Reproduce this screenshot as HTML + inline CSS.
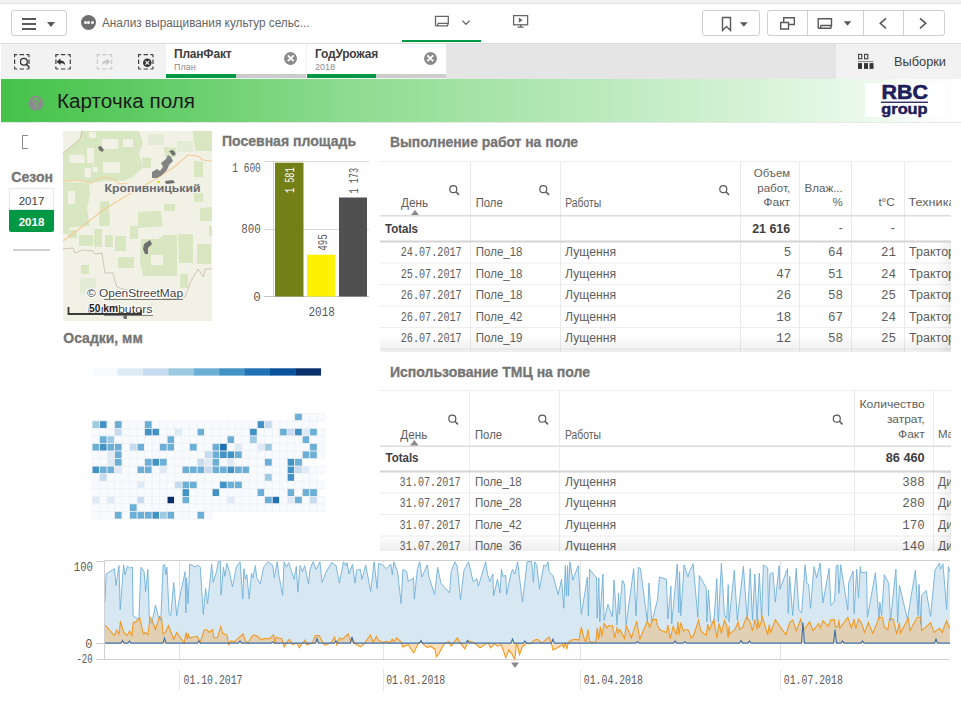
<!DOCTYPE html>
<html><head><meta charset="utf-8">
<style>
*{margin:0;padding:0;box-sizing:border-box}
html,body{width:961px;height:724px;overflow:hidden;background:#fff;font-family:"Liberation Sans",sans-serif;color:#595959}
.a{position:absolute}
.mono{font-family:"Liberation Mono",monospace}
#top{left:0;top:0;width:961px;height:4px;background:#f1f1f1;border-bottom:1px solid #e2e2e2}
#bar{left:0;top:4px;width:961px;height:40px;background:#fff;border-bottom:1px solid #dadada}
.btn{border:1px solid #cfcfcf;border-radius:3px;background:#fff}
#tool{left:1px;top:44px;width:960px;height:35px;background:#f2f2f2}
.tab{top:44px;height:34px;background:#fff}
.tab .t1{position:absolute;left:8px;top:3px;font-size:12px;font-weight:bold;color:#404040;letter-spacing:-0.2px}
.tab .t2{position:absolute;left:8px;top:18px;font-size:9px;color:#8c8c8c}
.tab .pb{position:absolute;left:0;bottom:0;height:4px;width:100%;background:#cccccc}
.tab .pg{position:absolute;left:0;bottom:0;height:4px;background:#009845}
.tab .x{position:absolute;top:8px;width:13px;height:13px;border-radius:50%;background:#8a8a8a}
#hdr{left:1px;top:79px;width:960px;height:44px;background:linear-gradient(to right,#45c24a 0%,#64cd68 17%,#8edc91 37%,#b2e7b3 57%,#d3f2d4 77%,#ebf9eb 90%,#ffffff 100%);border-bottom:1px solid #e8e8e8}
.ttl{font-size:14px;font-weight:bold;color:#7b7b7b;letter-spacing:-0.3px}
table{border-collapse:collapse}
.tbl{font-size:11px;color:#595959}
.hl{background:#e6e6e6}
.vl{background:#ececec}
</style></head><body>
<div class="a" id="top"></div>
<div class="a" id="bar">
  <div class="a btn" style="left:11px;top:6px;width:56px;height:26px">
    <div class="a" style="left:10px;top:7px;width:14px;height:2px;background:#595959"></div>
    <div class="a" style="left:10px;top:12px;width:14px;height:2px;background:#595959"></div>
    <div class="a" style="left:10px;top:17px;width:14px;height:2px;background:#595959"></div>
    <div class="a" style="left:35px;top:11px;width:0;height:0;border-left:4px solid transparent;border-right:4px solid transparent;border-top:5px solid #595959"></div>
  </div>
  <div class="a" style="left:81px;top:11px;width:15px;height:15px;border-radius:50%;background:#6f6f6f"></div>
  <div class="a" style="left:83.5px;top:17px;width:3px;height:3px;border-radius:50%;background:#fff"></div>
  <div class="a" style="left:87px;top:17px;width:3px;height:3px;border-radius:50%;background:#fff"></div>
  <div class="a" style="left:90.5px;top:17px;width:3px;height:3px;border-radius:50%;background:#fff"></div>
  <svg class="a" style="left:0;top:0" width="400" height="40" viewBox="0 4 400 40"><text x="101.9" y="27.3" font-size="12" fill="#666" textLength="207.7" lengthAdjust="spacingAndGlyphs">Анализ выращивания культур сельс...</text></svg>
  <svg class="a" style="left:0;top:0" width="961" height="40" viewBox="0 4 961 40">
    <path d="M435.5 25.8 V16.3 H448.3 V23.3 M435.5 25.8 H447.4 L448.3 23.3 H438.2 L437.3 25.8" fill="none" stroke="#666" stroke-width="1.3"/>
    <path d="M462.3 20.6 L466 24.3 L469.7 20.6" fill="none" stroke="#666" stroke-width="1.3"/>
    <rect x="513.6" y="15.6" width="14" height="9.2" fill="none" stroke="#666" stroke-width="1.3"/>
    <path d="M518.8 17.6 L522.6 20.2 L518.8 22.8Z" fill="#666"/>
    <path d="M520.6 24.8 V26.6 M517.6 27.2 H523.6" stroke="#666" stroke-width="1.3"/>
  </svg>
  <div class="a" style="left:402px;top:35.5px;width:79px;height:2px;background:#009845"></div>
  <div class="a btn" style="left:702px;top:6px;width:58px;height:26px">
    <svg class="a" style="left:14px;top:5px" width="32" height="16" viewBox="0 0 32 16">
      <path d="M5.5 1.5 H13.5 V14.5 L9.5 10.5 L5.5 14.5 Z" fill="none" stroke="#595959" stroke-width="1.4"/>
      <path d="M23 6.3 H30.6 L26.8 10.8Z" fill="#595959"/>
    </svg>
  </div>
  <div class="a btn" style="left:767px;top:6px;width:178px;height:26px"></div>
  <div class="a" style="left:807px;top:7px;width:1px;height:24px;background:#cfcfcf"></div>
  <div class="a" style="left:863px;top:7px;width:1px;height:24px;background:#cfcfcf"></div>
  <div class="a" style="left:903px;top:7px;width:1px;height:24px;background:#cfcfcf"></div>
  <svg class="a" style="left:0;top:0" width="961" height="40" viewBox="0 4 961 40">
    <path d="M780.7 22.5 H788.5 V29 H780.7 Z M783.7 22.5 V17.7 H794.3 V24.5 H788.5" fill="none" stroke="#595959" stroke-width="1.4"/>
    <path d="M818.2 28.3 V18.8 H831.5 V25.5 M818.2 28.3 H830.7 L831.5 25.5 H821 L820.2 28.3" fill="none" stroke="#595959" stroke-width="1.4"/>
    <path d="M843.7 21.3 H851.3 L847.5 25.8Z" fill="#595959"/>
    <path d="M886 18.3 L880.3 23.3 L886 28.3" fill="none" stroke="#595959" stroke-width="1.6"/>
    <path d="M920 18.3 L925.7 23.3 L920 28.3" fill="none" stroke="#595959" stroke-width="1.6"/>
  </svg>
</div>
<div class="a" id="tool"></div>
<div class="a" style="left:446px;top:44px;width:390px;height:35px;background:#e5e5e5"></div>
<svg class="a" style="left:0;top:44px" width="170" height="35" viewBox="0 44 170 35">
  <g fill="none" stroke="#404040" stroke-width="1.2" stroke-dasharray="2.6 2.4 4.4 2.4 2.6 0">
    <rect x="14.6" y="54.6" width="14.4" height="14.4"/>
    <rect x="55.9" y="54.6" width="14.4" height="14.4"/>
    <rect x="138.6" y="54.6" width="14.4" height="14.4"/>
  </g>
  <rect x="97.3" y="54.6" width="14.4" height="14.4" fill="none" stroke="#c8c8c8" stroke-width="1.2" stroke-dasharray="2.6 2.4 4.4 2.4 2.6 0"/>
  <circle cx="23.9" cy="61.8" r="3.4" fill="#f2f2f2" stroke="#333" stroke-width="1.3"/>
  <path d="M26.4 64.3 L29 67" stroke="#333" stroke-width="1.6"/>
  <path d="M56.5 61.8 L60.5 58.6 V60.6 C63 60.6 65 62 65.2 65 C64 63.6 62.5 63.2 60.5 63.2 V65Z" fill="#333"/>
  <path d="M110.5 61.8 L106.5 58.6 V60.6 C104 60.6 102 62 101.8 65 C103 63.6 104.5 63.2 106.5 63.2 V65Z" fill="#c8c8c8"/>
  <circle cx="147.3" cy="62.8" r="4.3" fill="#333"/>
  <path d="M145.4 60.9 L149.2 64.7 M149.2 60.9 L145.4 64.7" stroke="#f2f2f2" stroke-width="1.2"/>
</svg>
<div class="a tab" style="left:166px;width:140px">
  <div class="t1">ПланФакт</div><div class="t2">План</div>
  <div class="x" style="left:118px"></div>
  <div class="pb"><div class="pg" style="width:70px"></div></div>
</div>
<div class="a tab" style="left:307px;width:139px">
  <div class="t1">ГодУрожая</div><div class="t2">2018</div>
  <div class="x" style="left:117px"></div>
  <div class="pb"><div class="pg" style="width:69px"></div></div>
</div>
<svg class="a" style="left:0;top:44px" width="961" height="35" viewBox="0 0 961 35">
  <path d="M287.8 11.3 L293.7 17.2 M293.7 11.3 L287.8 17.2" stroke="#fff" stroke-width="1.8"/>
  <path d="M427.3 11.3 L433.2 17.2 M433.2 11.3 L427.3 17.2" stroke="#fff" stroke-width="1.8"/>

</svg>
<div class="a" style="left:836px;top:44px;width:125px;height:35px;background:#f2f2f2"></div>
<svg class="a" style="left:836px;top:44px" width="40" height="35" viewBox="836 44 40 35">
  <rect x="858.6" y="54.4" width="3.2" height="4.4" fill="none" stroke="#404040" stroke-width="1.1"/>
  <rect x="864.6" y="54.4" width="3.2" height="4.4" fill="none" stroke="#404040" stroke-width="1.1"/>
  <rect x="858" y="61" width="15.5" height="1.1" fill="#8a8a8a"/>
  <rect x="858" y="63.1" width="4" height="5.8" fill="#333"/>
  <rect x="864" y="63.1" width="4" height="5.8" fill="#333"/>
  <rect x="869.5" y="63.1" width="4" height="5.8" fill="#333"/>
</svg>
<svg class="a" style="left:880px;top:44px" width="81" height="35" viewBox="880 44 81 35"><text x="894" y="65.8" font-size="12.5" fill="#404040" textLength="52" lengthAdjust="spacingAndGlyphs">Выборки</text></svg>

<div class="a" id="hdr"></div>
<svg class="a" style="left:26px;top:93px" width="20" height="20" viewBox="26 93 20 20"><circle cx="35.8" cy="103.2" r="7.4" fill="#8c8c8c"/><path d="M33.2 101.2 C33.2 99 34.5 98.4 35.9 98.4 C37.4 98.4 38.5 99.3 38.5 100.6 C38.5 102.2 36.2 102.6 36 104.8" fill="none" stroke="#52c352" stroke-width="1.5"/><circle cx="35.9" cy="107.2" r="0.95" fill="#52c352"/></svg>
<svg class="a" style="left:0;top:79px" width="300" height="44" viewBox="0 79 300 44"><text x="57" y="108.2" font-size="20" fill="#1a1a1a" textLength="138" lengthAdjust="spacingAndGlyphs">Карточка поля</text></svg>
<div class="a" style="left:865px;top:83px;width:82px;height:34px;background:#fff"></div>
<svg class="a" style="left:865px;top:83px" width="82" height="35" viewBox="865 83 82 35">
  <text x="881.5" y="99.2" font-size="19.5" font-weight="bold" fill="#1e1e5a" textLength="46.5" lengthAdjust="spacingAndGlyphs" stroke="#1e1e5a" stroke-width="0.6">RBC</text>
  <rect x="881" y="101.6" width="47" height="1.3" fill="#1e1e5a"/>
  <text x="881.3" y="114.3" font-size="14.5" font-weight="bold" fill="#1e1e5a" textLength="46.3" lengthAdjust="spacingAndGlyphs" stroke="#1e1e5a" stroke-width="0.5">group</text>
</svg>

<!-- left filter -->
<div class="a" style="left:22px;top:135px;width:6px;height:14px;border:1.5px solid #8a8a8a;border-right:none"></div>
<svg class="a" style="left:0;top:160px" width="70" height="28" viewBox="0 160 70 28"><text x="11.3" y="182" font-size="15" font-weight="bold" fill="#757575" stroke="#757575" stroke-width="0.3" textLength="41.7" lengthAdjust="spacingAndGlyphs">Сезон</text></svg>
<div class="a" style="left:9px;top:188px;width:45px;height:22px;border:1px solid #e8e8e8;background:#fff;font-size:11.5px;color:#404040;text-align:center;line-height:24px">2017</div>
<div class="a" style="left:9px;top:210px;width:45px;height:22px;background:#009845;border-radius:0 0 2px 2px;font-size:11.5px;font-weight:bold;color:#fff;text-align:center;line-height:25px">2018</div>
<div class="a" style="left:13px;top:249px;width:37px;height:2px;background:#cfcfcf"></div>

<!-- map -->
<svg class="a" style="left:63px;top:131px" width="149" height="190" viewBox="0 0 149 190">
  <rect width="149" height="190" fill="#f1f1e6"/>
  <g fill="#d8e6c1">
    <path d="M18 0 H76 L80 12 L76 22 L80 36 L70 46 L60 50 L40 50 L28 52 L15 50 L0 51 V22 L5 18 L17 8Z"/>
    <path d="M0 51 L26 52 L27 64 L24 78 L27 95 L0 97Z"/>
    <path d="M37 71 L46 70 L47 95 L36 95Z"/>
    <path d="M75 81 L98 80 L100 95 L75 97Z"/>
    <path d="M101 73 L112 73 L112 80 L101 80Z"/>
    <path d="M79 26 L88 27 L88 37 L80 37Z"/>
    <path d="M101 16 L113 17 L113 26 L102 26Z"/>
    <path d="M130 0 H149 V20 L132 20Z"/>
    <path d="M131 30 L140 31 L140 46 L131 46Z"/>
    <path d="M131 62 L140 62 L140 71 L131 71Z"/>
    <path d="M137 77 L149 76 V90 L137 90Z"/>
    <path d="M0 95 L6 95 L6 103 L0 103Z"/>
    <path d="M5 99 L14 99 L14 107 L5 107Z"/>
    <path d="M16 104 L30 104 L30 115 L16 115Z"/>
    <path d="M31 98 L39 98 L39 116 L31 116Z"/>
    <path d="M42 104 L50 104 L50 116 L42 116Z"/>
    <path d="M52 105 L63 105 L63 120 L52 120Z"/>
    <path d="M67 95 L75 95 L75 108 L67 108Z"/>
    <path d="M55 126 L71 126 L71 137 L55 137Z"/>
    <path d="M18 134 L26 134 L26 143 L18 143Z"/>
    <path d="M78 108 L95 108 L101 104 L114 104 L114 145 L80 145 L77 130Z"/>
    <path d="M115 103 L130 103 L130 132 L116 132Z"/>
    <path d="M134 113 L148 113 L148 133 L134 133Z"/>
    <path d="M117 143 L125 143 L125 157 L117 157Z"/>
    <path d="M146 95 L149 95 V105 L146 105Z"/>
  </g>
  <g fill="#e4ecd7"><path d="M17 147 L33 147 L33 163 L17 163Z"/><path d="M85 3 L101 3 L101 14 L85 14Z"/><path d="M114 10 L130 10 L130 21 L114 21Z"/></g>
  <g fill="#f1f1e6">
    <path d="M39 8 L55 8 L55 18 L39 18Z"/>
    <path d="M24 17 L31 17 L31 32 L24 32Z"/>
    <path d="M6.5 23.6 L21.6 23.6 L21.6 32 L6.5 32Z"/>
    <path d="M40 31 L57 31 L57 42 L40 42Z"/>
    <path d="M21.6 37 L28 37 L28 46.5 L21.6 46.5Z"/>
    <path d="M29.5 36 L35 36 L35 41 L29.5 41Z"/>
    <path d="M26 1 L33 1 L33 7 L26 7Z"/>
    <path d="M5 60 L12 60 L12 73 L5 73Z"/>
    <path d="M88 124 L100 124 L100 134 L88 134Z"/>
    <path d="M60 8 L70 8 L70 16 L60 16Z"/>
  </g>
  <path d="M0 50 L15 49 L28 52 L40 46 L50 48 L57 53 L65 52" fill="none" stroke="#f3cd98" stroke-width="1.1"/>
  <path d="M0 110 L20 95 L40 79 L58 68 L77 57 L96 46 L111 36 L125 24 L135 25 L140 29 L149 30" fill="none" stroke="#f3cd98" stroke-width="1.1"/>
  <path d="M0 118 L10 117 L12 122 L20 119 L30 120 L32 123 L39 122 L40 130 L42 142 L50 142 L52 150 L54 156 L60 158 L75 162 L95 162 L101 168 L110 168 L122 166 L128 150 L135 138 L140.5 146 L142 138 L149 138" fill="none" stroke="#c9b9aa" stroke-width="0.8"/>
  <path d="M19 0 L17 8 L5 18 L0 22" fill="none" stroke="#c9b9aa" stroke-width="0.8"/>
  <g fill="#707070">
    <path d="M35 16 L38 15 L41 19 L39 21 L36 19Z"/>
    <path d="M89 41 L94 38 L97 40 L100 36 L98 32 L103 28 L105 24 L108 26 L110 30 L106 34 L104 39 L99 44 L94 47 L89 47Z" opacity="0.85"/>
    <path d="M106 20 L110 19 L113 23 L110 25Z"/>
    <path d="M102 50 L110 49 L112 52 L103 53Z"/>
    <path d="M81 113 L87 109 L89 113 L85 117 L85 123 L82 123 L80 118Z"/>
    <path d="M60 185 L64 184 L64 188 L61 188Z"/>
  </g>
  <rect x="94" y="50" width="3" height="2" fill="#e8e000"/>
  <text x="41.5" y="60.5" font-family="Liberation Sans" font-size="11.5" font-weight="bold" fill="#6b6b6b" stroke="#f1f1ea" stroke-width="2.2" paint-order="stroke" textLength="96" lengthAdjust="spacingAndGlyphs">Кропивницький</text>
  <text x="24" y="165.5" font-family="Liberation Sans" font-size="11.5" fill="#444" stroke="#fff" stroke-width="2.2" paint-order="stroke" textLength="96" lengthAdjust="spacingAndGlyphs">© OpenStreetMap</text>
  <path d="M41 168.5 H120" stroke="#555" stroke-width="0.8"/>
  <text x="24.5" y="182" font-family="Liberation Sans" font-size="11.5" fill="#444" stroke="#fff" stroke-width="2.2" paint-order="stroke" textLength="65" lengthAdjust="spacingAndGlyphs">contributors</text>
  <path d="M41 184.5 H90" stroke="#555" stroke-width="0.7"/>
  <path d="M5.5 176 V183 H78 V179" fill="none" stroke="#3a3a3a" stroke-width="1.8"/>
  <text x="26" y="181" font-family="Liberation Sans" font-size="10.5" font-weight="bold" fill="#222" stroke="#fff" stroke-width="1.6" paint-order="stroke" textLength="29" lengthAdjust="spacingAndGlyphs">50 km</text>
</svg>

<!-- bar chart -->
<svg class="a" style="left:215px;top:128px" width="160" height="24" viewBox="215 128 160 24"><text x="222" y="145.5" font-size="14" font-weight="bold" fill="#757575" stroke="#757575" stroke-width="0.3" textLength="134" lengthAdjust="spacingAndGlyphs">Посевная площадь</text></svg>
<svg class="a" style="left:215px;top:150px" width="160" height="180" viewBox="215 150 160 180">
  <g stroke="#d9d9d9" stroke-width="1">
    <path d="M264 161.5 H369 M264 229.5 H369"/>
  </g>
  <path d="M273.5 161 V297" stroke="#d0d0d0" stroke-width="1"/>
  <path d="M264 296.5 H369" stroke="#c4c4c4" stroke-width="1"/>
  <rect x="275" y="162.7" width="28.5" height="133.8" fill="#738018"/>
  <rect x="307" y="254.7" width="28" height="41.8" fill="#fff200"/>
  <rect x="339" y="197.5" width="28" height="99" fill="#505050"/>
  <g font-family="Liberation Mono" font-size="12.5" fill="#595959" text-anchor="end">
    <text x="260.8" y="171.5" textLength="28.5" lengthAdjust="spacingAndGlyphs">1 600</text>
    <text x="260.8" y="233" textLength="19.5" lengthAdjust="spacingAndGlyphs">800</text>
    <text x="260.8" y="300.5">0</text>
    <text x="335" y="316.2" textLength="26.5" lengthAdjust="spacingAndGlyphs">2018</text>
  </g>
  <g font-family="Liberation Mono" font-size="12">
    <text transform="translate(294.3,193) rotate(-90)" fill="#fff" textLength="25.5" lengthAdjust="spacingAndGlyphs">1 581</text>
    <text transform="translate(326.5,250.8) rotate(-90)" fill="#595959" textLength="16.5" lengthAdjust="spacingAndGlyphs">495</text>
    <text transform="translate(357.5,193.5) rotate(-90)" fill="#595959" textLength="25.5" lengthAdjust="spacingAndGlyphs">1 173</text>
  </g>
</svg>

<!-- heatmap -->
<svg class="a" style="left:55px;top:325px" width="120" height="26" viewBox="55 325 120 26"><text x="63.3" y="342.5" font-size="14" font-weight="bold" fill="#757575" stroke="#757575" stroke-width="0.3" textLength="79.5" lengthAdjust="spacingAndGlyphs">Осадки, мм</text></svg>
<svg class="a" style="left:0;top:0" width="961" height="724" viewBox="0 0 961 724">
  <g><rect x="92.30" y="368.3" width="25.68" height="7.3" fill="#f7fbff"/><rect x="117.68" y="368.3" width="25.68" height="7.3" fill="#deebf7"/><rect x="143.06" y="368.3" width="25.68" height="7.3" fill="#c6dbef"/><rect x="168.43" y="368.3" width="25.68" height="7.3" fill="#9ecae1"/><rect x="193.81" y="368.3" width="25.68" height="7.3" fill="#6baed6"/><rect x="219.19" y="368.3" width="25.68" height="7.3" fill="#4292c6"/><rect x="244.57" y="368.3" width="25.68" height="7.3" fill="#2171b5"/><rect x="269.94" y="368.3" width="25.68" height="7.3" fill="#08519c"/><rect x="295.32" y="368.3" width="25.68" height="7.3" fill="#08306b"/></g>
  <g stroke="#f1f1f1" stroke-width="0.7"><rect x="294.74" y="413.30" width="7.50" height="7.55" fill="#6baed6"/><rect x="302.24" y="413.30" width="7.50" height="7.55" fill="#f7fbff"/><rect x="309.75" y="413.30" width="7.50" height="7.55" fill="#f7fbff"/><rect x="317.25" y="413.30" width="7.50" height="7.55" fill="#f7fbff"/><rect x="92.10" y="420.85" width="7.50" height="7.55" fill="#9ecae1"/><rect x="99.60" y="420.85" width="7.50" height="7.55" fill="#4292c6"/><rect x="107.11" y="420.85" width="7.50" height="7.55" fill="#f7fbff"/><rect x="114.61" y="420.85" width="7.50" height="7.55" fill="#6baed6"/><rect x="122.12" y="420.85" width="7.50" height="7.55" fill="#f7fbff"/><rect x="129.62" y="420.85" width="7.50" height="7.55" fill="#f7fbff"/><rect x="137.13" y="420.85" width="7.50" height="7.55" fill="#f7fbff"/><rect x="144.63" y="420.85" width="7.50" height="7.55" fill="#6baed6"/><rect x="152.14" y="420.85" width="7.50" height="7.55" fill="#f7fbff"/><rect x="159.64" y="420.85" width="7.50" height="7.55" fill="#f7fbff"/><rect x="167.15" y="420.85" width="7.50" height="7.55" fill="#f7fbff"/><rect x="174.65" y="420.85" width="7.50" height="7.55" fill="#f7fbff"/><rect x="182.16" y="420.85" width="7.50" height="7.55" fill="#f7fbff"/><rect x="189.66" y="420.85" width="7.50" height="7.55" fill="#f7fbff"/><rect x="197.17" y="420.85" width="7.50" height="7.55" fill="#f7fbff"/><rect x="204.68" y="420.85" width="7.50" height="7.55" fill="#f7fbff"/><rect x="212.18" y="420.85" width="7.50" height="7.55" fill="#f7fbff"/><rect x="219.69" y="420.85" width="7.50" height="7.55" fill="#f7fbff"/><rect x="227.19" y="420.85" width="7.50" height="7.55" fill="#f7fbff"/><rect x="234.69" y="420.85" width="7.50" height="7.55" fill="#f7fbff"/><rect x="242.20" y="420.85" width="7.50" height="7.55" fill="#f7fbff"/><rect x="249.70" y="420.85" width="7.50" height="7.55" fill="#f7fbff"/><rect x="257.21" y="420.85" width="7.50" height="7.55" fill="#4292c6"/><rect x="264.72" y="420.85" width="7.50" height="7.55" fill="#c6dbef"/><rect x="272.22" y="420.85" width="7.50" height="7.55" fill="#f7fbff"/><rect x="279.73" y="420.85" width="7.50" height="7.55" fill="#f7fbff"/><rect x="287.23" y="420.85" width="7.50" height="7.55" fill="#f7fbff"/><rect x="294.74" y="420.85" width="7.50" height="7.55" fill="#f7fbff"/><rect x="302.24" y="420.85" width="7.50" height="7.55" fill="#f7fbff"/><rect x="309.75" y="420.85" width="7.50" height="7.55" fill="#f7fbff"/><rect x="92.10" y="428.40" width="7.50" height="7.55" fill="#f7fbff"/><rect x="99.60" y="428.40" width="7.50" height="7.55" fill="#f7fbff"/><rect x="107.11" y="428.40" width="7.50" height="7.55" fill="#f7fbff"/><rect x="114.61" y="428.40" width="7.50" height="7.55" fill="#c6dbef"/><rect x="122.12" y="428.40" width="7.50" height="7.55" fill="#f7fbff"/><rect x="129.62" y="428.40" width="7.50" height="7.55" fill="#f7fbff"/><rect x="137.13" y="428.40" width="7.50" height="7.55" fill="#f7fbff"/><rect x="144.63" y="428.40" width="7.50" height="7.55" fill="#4292c6"/><rect x="152.14" y="428.40" width="7.50" height="7.55" fill="#4292c6"/><rect x="159.64" y="428.40" width="7.50" height="7.55" fill="#f7fbff"/><rect x="167.15" y="428.40" width="7.50" height="7.55" fill="#f7fbff"/><rect x="174.65" y="428.40" width="7.50" height="7.55" fill="#deebf7"/><rect x="182.16" y="428.40" width="7.50" height="7.55" fill="#f7fbff"/><rect x="189.66" y="428.40" width="7.50" height="7.55" fill="#f7fbff"/><rect x="197.17" y="428.40" width="7.50" height="7.55" fill="#6baed6"/><rect x="204.68" y="428.40" width="7.50" height="7.55" fill="#f7fbff"/><rect x="212.18" y="428.40" width="7.50" height="7.55" fill="#f7fbff"/><rect x="219.69" y="428.40" width="7.50" height="7.55" fill="#f7fbff"/><rect x="227.19" y="428.40" width="7.50" height="7.55" fill="#f7fbff"/><rect x="234.69" y="428.40" width="7.50" height="7.55" fill="#f7fbff"/><rect x="242.20" y="428.40" width="7.50" height="7.55" fill="#f7fbff"/><rect x="249.70" y="428.40" width="7.50" height="7.55" fill="#4292c6"/><rect x="257.21" y="428.40" width="7.50" height="7.55" fill="#f7fbff"/><rect x="264.72" y="428.40" width="7.50" height="7.55" fill="#f7fbff"/><rect x="272.22" y="428.40" width="7.50" height="7.55" fill="#f7fbff"/><rect x="279.73" y="428.40" width="7.50" height="7.55" fill="#6baed6"/><rect x="287.23" y="428.40" width="7.50" height="7.55" fill="#c6dbef"/><rect x="294.74" y="428.40" width="7.50" height="7.55" fill="#4292c6"/><rect x="302.24" y="428.40" width="7.50" height="7.55" fill="#deebf7"/><rect x="309.75" y="428.40" width="7.50" height="7.55" fill="#6baed6"/><rect x="317.25" y="428.40" width="7.50" height="7.55" fill="#f7fbff"/><rect x="92.10" y="435.95" width="7.50" height="7.55" fill="#f7fbff"/><rect x="99.60" y="435.95" width="7.50" height="7.55" fill="#6baed6"/><rect x="107.11" y="435.95" width="7.50" height="7.55" fill="#9ecae1"/><rect x="114.61" y="435.95" width="7.50" height="7.55" fill="#f7fbff"/><rect x="122.12" y="435.95" width="7.50" height="7.55" fill="#f7fbff"/><rect x="129.62" y="435.95" width="7.50" height="7.55" fill="#f7fbff"/><rect x="137.13" y="435.95" width="7.50" height="7.55" fill="#f7fbff"/><rect x="144.63" y="435.95" width="7.50" height="7.55" fill="#f7fbff"/><rect x="152.14" y="435.95" width="7.50" height="7.55" fill="#f7fbff"/><rect x="159.64" y="435.95" width="7.50" height="7.55" fill="#f7fbff"/><rect x="167.15" y="435.95" width="7.50" height="7.55" fill="#6baed6"/><rect x="174.65" y="435.95" width="7.50" height="7.55" fill="#f7fbff"/><rect x="182.16" y="435.95" width="7.50" height="7.55" fill="#f7fbff"/><rect x="189.66" y="435.95" width="7.50" height="7.55" fill="#f7fbff"/><rect x="197.17" y="435.95" width="7.50" height="7.55" fill="#f7fbff"/><rect x="204.68" y="435.95" width="7.50" height="7.55" fill="#f7fbff"/><rect x="212.18" y="435.95" width="7.50" height="7.55" fill="#f7fbff"/><rect x="219.69" y="435.95" width="7.50" height="7.55" fill="#f7fbff"/><rect x="227.19" y="435.95" width="7.50" height="7.55" fill="#6baed6"/><rect x="234.69" y="435.95" width="7.50" height="7.55" fill="#f7fbff"/><rect x="242.20" y="435.95" width="7.50" height="7.55" fill="#f7fbff"/><rect x="249.70" y="435.95" width="7.50" height="7.55" fill="#9ecae1"/><rect x="257.21" y="435.95" width="7.50" height="7.55" fill="#f7fbff"/><rect x="264.72" y="435.95" width="7.50" height="7.55" fill="#f7fbff"/><rect x="272.22" y="435.95" width="7.50" height="7.55" fill="#f7fbff"/><rect x="279.73" y="435.95" width="7.50" height="7.55" fill="#f7fbff"/><rect x="287.23" y="435.95" width="7.50" height="7.55" fill="#f7fbff"/><rect x="294.74" y="435.95" width="7.50" height="7.55" fill="#f7fbff"/><rect x="302.24" y="435.95" width="7.50" height="7.55" fill="#6baed6"/><rect x="309.75" y="435.95" width="7.50" height="7.55" fill="#f7fbff"/><rect x="317.25" y="435.95" width="7.50" height="7.55" fill="#f7fbff"/><rect x="92.10" y="443.50" width="7.50" height="7.55" fill="#6baed6"/><rect x="99.60" y="443.50" width="7.50" height="7.55" fill="#4292c6"/><rect x="107.11" y="443.50" width="7.50" height="7.55" fill="#6baed6"/><rect x="114.61" y="443.50" width="7.50" height="7.55" fill="#6baed6"/><rect x="122.12" y="443.50" width="7.50" height="7.55" fill="#f7fbff"/><rect x="129.62" y="443.50" width="7.50" height="7.55" fill="#c6dbef"/><rect x="137.13" y="443.50" width="7.50" height="7.55" fill="#6baed6"/><rect x="144.63" y="443.50" width="7.50" height="7.55" fill="#f7fbff"/><rect x="152.14" y="443.50" width="7.50" height="7.55" fill="#f7fbff"/><rect x="159.64" y="443.50" width="7.50" height="7.55" fill="#6baed6"/><rect x="167.15" y="443.50" width="7.50" height="7.55" fill="#6baed6"/><rect x="174.65" y="443.50" width="7.50" height="7.55" fill="#f7fbff"/><rect x="182.16" y="443.50" width="7.50" height="7.55" fill="#f7fbff"/><rect x="189.66" y="443.50" width="7.50" height="7.55" fill="#6baed6"/><rect x="197.17" y="443.50" width="7.50" height="7.55" fill="#f7fbff"/><rect x="204.68" y="443.50" width="7.50" height="7.55" fill="#f7fbff"/><rect x="212.18" y="443.50" width="7.50" height="7.55" fill="#6baed6"/><rect x="219.69" y="443.50" width="7.50" height="7.55" fill="#2171b5"/><rect x="227.19" y="443.50" width="7.50" height="7.55" fill="#f7fbff"/><rect x="234.69" y="443.50" width="7.50" height="7.55" fill="#deebf7"/><rect x="242.20" y="443.50" width="7.50" height="7.55" fill="#f7fbff"/><rect x="249.70" y="443.50" width="7.50" height="7.55" fill="#f7fbff"/><rect x="257.21" y="443.50" width="7.50" height="7.55" fill="#deebf7"/><rect x="264.72" y="443.50" width="7.50" height="7.55" fill="#9ecae1"/><rect x="272.22" y="443.50" width="7.50" height="7.55" fill="#f7fbff"/><rect x="279.73" y="443.50" width="7.50" height="7.55" fill="#f7fbff"/><rect x="287.23" y="443.50" width="7.50" height="7.55" fill="#f7fbff"/><rect x="294.74" y="443.50" width="7.50" height="7.55" fill="#f7fbff"/><rect x="302.24" y="443.50" width="7.50" height="7.55" fill="#f7fbff"/><rect x="309.75" y="443.50" width="7.50" height="7.55" fill="#6baed6"/><rect x="317.25" y="443.50" width="7.50" height="7.55" fill="#f7fbff"/><rect x="92.10" y="451.05" width="7.50" height="7.55" fill="#f7fbff"/><rect x="99.60" y="451.05" width="7.50" height="7.55" fill="#f7fbff"/><rect x="107.11" y="451.05" width="7.50" height="7.55" fill="#deebf7"/><rect x="114.61" y="451.05" width="7.50" height="7.55" fill="#6baed6"/><rect x="122.12" y="451.05" width="7.50" height="7.55" fill="#f7fbff"/><rect x="129.62" y="451.05" width="7.50" height="7.55" fill="#f7fbff"/><rect x="137.13" y="451.05" width="7.50" height="7.55" fill="#f7fbff"/><rect x="144.63" y="451.05" width="7.50" height="7.55" fill="#f7fbff"/><rect x="152.14" y="451.05" width="7.50" height="7.55" fill="#f7fbff"/><rect x="159.64" y="451.05" width="7.50" height="7.55" fill="#f7fbff"/><rect x="167.15" y="451.05" width="7.50" height="7.55" fill="#f7fbff"/><rect x="174.65" y="451.05" width="7.50" height="7.55" fill="#f7fbff"/><rect x="182.16" y="451.05" width="7.50" height="7.55" fill="#f7fbff"/><rect x="189.66" y="451.05" width="7.50" height="7.55" fill="#f7fbff"/><rect x="197.17" y="451.05" width="7.50" height="7.55" fill="#f7fbff"/><rect x="204.68" y="451.05" width="7.50" height="7.55" fill="#c6dbef"/><rect x="212.18" y="451.05" width="7.50" height="7.55" fill="#6baed6"/><rect x="219.69" y="451.05" width="7.50" height="7.55" fill="#4292c6"/><rect x="227.19" y="451.05" width="7.50" height="7.55" fill="#4292c6"/><rect x="234.69" y="451.05" width="7.50" height="7.55" fill="#6baed6"/><rect x="242.20" y="451.05" width="7.50" height="7.55" fill="#f7fbff"/><rect x="249.70" y="451.05" width="7.50" height="7.55" fill="#f7fbff"/><rect x="257.21" y="451.05" width="7.50" height="7.55" fill="#f7fbff"/><rect x="264.72" y="451.05" width="7.50" height="7.55" fill="#f7fbff"/><rect x="272.22" y="451.05" width="7.50" height="7.55" fill="#f7fbff"/><rect x="279.73" y="451.05" width="7.50" height="7.55" fill="#f7fbff"/><rect x="287.23" y="451.05" width="7.50" height="7.55" fill="#f7fbff"/><rect x="294.74" y="451.05" width="7.50" height="7.55" fill="#f7fbff"/><rect x="302.24" y="451.05" width="7.50" height="7.55" fill="#6baed6"/><rect x="309.75" y="451.05" width="7.50" height="7.55" fill="#6baed6"/><rect x="317.25" y="451.05" width="7.50" height="7.55" fill="#f7fbff"/><rect x="92.10" y="458.60" width="7.50" height="7.55" fill="#f7fbff"/><rect x="99.60" y="458.60" width="7.50" height="7.55" fill="#f7fbff"/><rect x="107.11" y="458.60" width="7.50" height="7.55" fill="#deebf7"/><rect x="114.61" y="458.60" width="7.50" height="7.55" fill="#6baed6"/><rect x="122.12" y="458.60" width="7.50" height="7.55" fill="#f7fbff"/><rect x="129.62" y="458.60" width="7.50" height="7.55" fill="#f7fbff"/><rect x="137.13" y="458.60" width="7.50" height="7.55" fill="#f7fbff"/><rect x="144.63" y="458.60" width="7.50" height="7.55" fill="#6baed6"/><rect x="152.14" y="458.60" width="7.50" height="7.55" fill="#4292c6"/><rect x="159.64" y="458.60" width="7.50" height="7.55" fill="#6baed6"/><rect x="167.15" y="458.60" width="7.50" height="7.55" fill="#f7fbff"/><rect x="174.65" y="458.60" width="7.50" height="7.55" fill="#f7fbff"/><rect x="182.16" y="458.60" width="7.50" height="7.55" fill="#f7fbff"/><rect x="189.66" y="458.60" width="7.50" height="7.55" fill="#f7fbff"/><rect x="197.17" y="458.60" width="7.50" height="7.55" fill="#c6dbef"/><rect x="204.68" y="458.60" width="7.50" height="7.55" fill="#deebf7"/><rect x="212.18" y="458.60" width="7.50" height="7.55" fill="#6baed6"/><rect x="219.69" y="458.60" width="7.50" height="7.55" fill="#f7fbff"/><rect x="227.19" y="458.60" width="7.50" height="7.55" fill="#deebf7"/><rect x="234.69" y="458.60" width="7.50" height="7.55" fill="#f7fbff"/><rect x="242.20" y="458.60" width="7.50" height="7.55" fill="#f7fbff"/><rect x="249.70" y="458.60" width="7.50" height="7.55" fill="#f7fbff"/><rect x="257.21" y="458.60" width="7.50" height="7.55" fill="#f7fbff"/><rect x="264.72" y="458.60" width="7.50" height="7.55" fill="#6baed6"/><rect x="272.22" y="458.60" width="7.50" height="7.55" fill="#f7fbff"/><rect x="279.73" y="458.60" width="7.50" height="7.55" fill="#f7fbff"/><rect x="287.23" y="458.60" width="7.50" height="7.55" fill="#4292c6"/><rect x="294.74" y="458.60" width="7.50" height="7.55" fill="#6baed6"/><rect x="92.10" y="466.15" width="7.50" height="7.55" fill="#4292c6"/><rect x="99.60" y="466.15" width="7.50" height="7.55" fill="#6baed6"/><rect x="107.11" y="466.15" width="7.50" height="7.55" fill="#6baed6"/><rect x="114.61" y="466.15" width="7.50" height="7.55" fill="#deebf7"/><rect x="122.12" y="466.15" width="7.50" height="7.55" fill="#f7fbff"/><rect x="129.62" y="466.15" width="7.50" height="7.55" fill="#f7fbff"/><rect x="137.13" y="466.15" width="7.50" height="7.55" fill="#6baed6"/><rect x="144.63" y="466.15" width="7.50" height="7.55" fill="#6baed6"/><rect x="152.14" y="466.15" width="7.50" height="7.55" fill="#f7fbff"/><rect x="159.64" y="466.15" width="7.50" height="7.55" fill="#deebf7"/><rect x="167.15" y="466.15" width="7.50" height="7.55" fill="#f7fbff"/><rect x="174.65" y="466.15" width="7.50" height="7.55" fill="#f7fbff"/><rect x="182.16" y="466.15" width="7.50" height="7.55" fill="#6baed6"/><rect x="189.66" y="466.15" width="7.50" height="7.55" fill="#6baed6"/><rect x="197.17" y="466.15" width="7.50" height="7.55" fill="#6baed6"/><rect x="204.68" y="466.15" width="7.50" height="7.55" fill="#c6dbef"/><rect x="212.18" y="466.15" width="7.50" height="7.55" fill="#6baed6"/><rect x="219.69" y="466.15" width="7.50" height="7.55" fill="#6baed6"/><rect x="227.19" y="466.15" width="7.50" height="7.55" fill="#4292c6"/><rect x="234.69" y="466.15" width="7.50" height="7.55" fill="#6baed6"/><rect x="242.20" y="466.15" width="7.50" height="7.55" fill="#6baed6"/><rect x="249.70" y="466.15" width="7.50" height="7.55" fill="#f7fbff"/><rect x="257.21" y="466.15" width="7.50" height="7.55" fill="#f7fbff"/><rect x="264.72" y="466.15" width="7.50" height="7.55" fill="#f7fbff"/><rect x="272.22" y="466.15" width="7.50" height="7.55" fill="#f7fbff"/><rect x="279.73" y="466.15" width="7.50" height="7.55" fill="#f7fbff"/><rect x="287.23" y="466.15" width="7.50" height="7.55" fill="#4292c6"/><rect x="294.74" y="466.15" width="7.50" height="7.55" fill="#c6dbef"/><rect x="302.24" y="466.15" width="7.50" height="7.55" fill="#deebf7"/><rect x="309.75" y="466.15" width="7.50" height="7.55" fill="#f7fbff"/><rect x="317.25" y="466.15" width="7.50" height="7.55" fill="#f7fbff"/><rect x="92.10" y="473.70" width="7.50" height="7.55" fill="#f7fbff"/><rect x="99.60" y="473.70" width="7.50" height="7.55" fill="#c6dbef"/><rect x="107.11" y="473.70" width="7.50" height="7.55" fill="#f7fbff"/><rect x="114.61" y="473.70" width="7.50" height="7.55" fill="#f7fbff"/><rect x="122.12" y="473.70" width="7.50" height="7.55" fill="#f7fbff"/><rect x="129.62" y="473.70" width="7.50" height="7.55" fill="#f7fbff"/><rect x="137.13" y="473.70" width="7.50" height="7.55" fill="#f7fbff"/><rect x="144.63" y="473.70" width="7.50" height="7.55" fill="#f7fbff"/><rect x="152.14" y="473.70" width="7.50" height="7.55" fill="#f7fbff"/><rect x="159.64" y="473.70" width="7.50" height="7.55" fill="#f7fbff"/><rect x="167.15" y="473.70" width="7.50" height="7.55" fill="#f7fbff"/><rect x="174.65" y="473.70" width="7.50" height="7.55" fill="#f7fbff"/><rect x="182.16" y="473.70" width="7.50" height="7.55" fill="#f7fbff"/><rect x="189.66" y="473.70" width="7.50" height="7.55" fill="#f7fbff"/><rect x="197.17" y="473.70" width="7.50" height="7.55" fill="#f7fbff"/><rect x="204.68" y="473.70" width="7.50" height="7.55" fill="#f7fbff"/><rect x="212.18" y="473.70" width="7.50" height="7.55" fill="#f7fbff"/><rect x="219.69" y="473.70" width="7.50" height="7.55" fill="#f7fbff"/><rect x="227.19" y="473.70" width="7.50" height="7.55" fill="#f7fbff"/><rect x="234.69" y="473.70" width="7.50" height="7.55" fill="#f7fbff"/><rect x="242.20" y="473.70" width="7.50" height="7.55" fill="#f7fbff"/><rect x="249.70" y="473.70" width="7.50" height="7.55" fill="#f7fbff"/><rect x="257.21" y="473.70" width="7.50" height="7.55" fill="#f7fbff"/><rect x="264.72" y="473.70" width="7.50" height="7.55" fill="#9ecae1"/><rect x="272.22" y="473.70" width="7.50" height="7.55" fill="#f7fbff"/><rect x="279.73" y="473.70" width="7.50" height="7.55" fill="#f7fbff"/><rect x="287.23" y="473.70" width="7.50" height="7.55" fill="#4292c6"/><rect x="294.74" y="473.70" width="7.50" height="7.55" fill="#f7fbff"/><rect x="302.24" y="473.70" width="7.50" height="7.55" fill="#f7fbff"/><rect x="309.75" y="473.70" width="7.50" height="7.55" fill="#f7fbff"/><rect x="92.10" y="481.25" width="7.50" height="7.55" fill="#f7fbff"/><rect x="99.60" y="481.25" width="7.50" height="7.55" fill="#f7fbff"/><rect x="107.11" y="481.25" width="7.50" height="7.55" fill="#f7fbff"/><rect x="114.61" y="481.25" width="7.50" height="7.55" fill="#f7fbff"/><rect x="122.12" y="481.25" width="7.50" height="7.55" fill="#f7fbff"/><rect x="129.62" y="481.25" width="7.50" height="7.55" fill="#f7fbff"/><rect x="137.13" y="481.25" width="7.50" height="7.55" fill="#deebf7"/><rect x="144.63" y="481.25" width="7.50" height="7.55" fill="#f7fbff"/><rect x="152.14" y="481.25" width="7.50" height="7.55" fill="#f7fbff"/><rect x="159.64" y="481.25" width="7.50" height="7.55" fill="#f7fbff"/><rect x="167.15" y="481.25" width="7.50" height="7.55" fill="#f7fbff"/><rect x="174.65" y="481.25" width="7.50" height="7.55" fill="#c6dbef"/><rect x="182.16" y="481.25" width="7.50" height="7.55" fill="#6baed6"/><rect x="189.66" y="481.25" width="7.50" height="7.55" fill="#6baed6"/><rect x="197.17" y="481.25" width="7.50" height="7.55" fill="#f7fbff"/><rect x="204.68" y="481.25" width="7.50" height="7.55" fill="#f7fbff"/><rect x="212.18" y="481.25" width="7.50" height="7.55" fill="#f7fbff"/><rect x="219.69" y="481.25" width="7.50" height="7.55" fill="#4292c6"/><rect x="227.19" y="481.25" width="7.50" height="7.55" fill="#6baed6"/><rect x="234.69" y="481.25" width="7.50" height="7.55" fill="#6baed6"/><rect x="242.20" y="481.25" width="7.50" height="7.55" fill="#f7fbff"/><rect x="249.70" y="481.25" width="7.50" height="7.55" fill="#f7fbff"/><rect x="257.21" y="481.25" width="7.50" height="7.55" fill="#f7fbff"/><rect x="264.72" y="481.25" width="7.50" height="7.55" fill="#f7fbff"/><rect x="272.22" y="481.25" width="7.50" height="7.55" fill="#f7fbff"/><rect x="279.73" y="481.25" width="7.50" height="7.55" fill="#f7fbff"/><rect x="287.23" y="481.25" width="7.50" height="7.55" fill="#f7fbff"/><rect x="294.74" y="481.25" width="7.50" height="7.55" fill="#f7fbff"/><rect x="302.24" y="481.25" width="7.50" height="7.55" fill="#f7fbff"/><rect x="309.75" y="481.25" width="7.50" height="7.55" fill="#f7fbff"/><rect x="317.25" y="481.25" width="7.50" height="7.55" fill="#f7fbff"/><rect x="92.10" y="488.80" width="7.50" height="7.55" fill="#f7fbff"/><rect x="99.60" y="488.80" width="7.50" height="7.55" fill="#f7fbff"/><rect x="107.11" y="488.80" width="7.50" height="7.55" fill="#f7fbff"/><rect x="114.61" y="488.80" width="7.50" height="7.55" fill="#f7fbff"/><rect x="122.12" y="488.80" width="7.50" height="7.55" fill="#f7fbff"/><rect x="129.62" y="488.80" width="7.50" height="7.55" fill="#f7fbff"/><rect x="137.13" y="488.80" width="7.50" height="7.55" fill="#f7fbff"/><rect x="144.63" y="488.80" width="7.50" height="7.55" fill="#f7fbff"/><rect x="152.14" y="488.80" width="7.50" height="7.55" fill="#f7fbff"/><rect x="159.64" y="488.80" width="7.50" height="7.55" fill="#f7fbff"/><rect x="167.15" y="488.80" width="7.50" height="7.55" fill="#f7fbff"/><rect x="174.65" y="488.80" width="7.50" height="7.55" fill="#f7fbff"/><rect x="182.16" y="488.80" width="7.50" height="7.55" fill="#4292c6"/><rect x="189.66" y="488.80" width="7.50" height="7.55" fill="#f7fbff"/><rect x="197.17" y="488.80" width="7.50" height="7.55" fill="#f7fbff"/><rect x="204.68" y="488.80" width="7.50" height="7.55" fill="#f7fbff"/><rect x="212.18" y="488.80" width="7.50" height="7.55" fill="#4292c6"/><rect x="219.69" y="488.80" width="7.50" height="7.55" fill="#f7fbff"/><rect x="227.19" y="488.80" width="7.50" height="7.55" fill="#f7fbff"/><rect x="234.69" y="488.80" width="7.50" height="7.55" fill="#f7fbff"/><rect x="242.20" y="488.80" width="7.50" height="7.55" fill="#f7fbff"/><rect x="249.70" y="488.80" width="7.50" height="7.55" fill="#f7fbff"/><rect x="257.21" y="488.80" width="7.50" height="7.55" fill="#6baed6"/><rect x="264.72" y="488.80" width="7.50" height="7.55" fill="#f7fbff"/><rect x="272.22" y="488.80" width="7.50" height="7.55" fill="#f7fbff"/><rect x="279.73" y="488.80" width="7.50" height="7.55" fill="#f7fbff"/><rect x="287.23" y="488.80" width="7.50" height="7.55" fill="#6baed6"/><rect x="294.74" y="488.80" width="7.50" height="7.55" fill="#f7fbff"/><rect x="302.24" y="488.80" width="7.50" height="7.55" fill="#6baed6"/><rect x="309.75" y="488.80" width="7.50" height="7.55" fill="#6baed6"/><rect x="92.10" y="496.35" width="7.50" height="7.55" fill="#deebf7"/><rect x="99.60" y="496.35" width="7.50" height="7.55" fill="#f7fbff"/><rect x="107.11" y="496.35" width="7.50" height="7.55" fill="#deebf7"/><rect x="114.61" y="496.35" width="7.50" height="7.55" fill="#f7fbff"/><rect x="122.12" y="496.35" width="7.50" height="7.55" fill="#f7fbff"/><rect x="129.62" y="496.35" width="7.50" height="7.55" fill="#f7fbff"/><rect x="137.13" y="496.35" width="7.50" height="7.55" fill="#c6dbef"/><rect x="144.63" y="496.35" width="7.50" height="7.55" fill="#f7fbff"/><rect x="152.14" y="496.35" width="7.50" height="7.55" fill="#f7fbff"/><rect x="159.64" y="496.35" width="7.50" height="7.55" fill="#f7fbff"/><rect x="167.15" y="496.35" width="7.50" height="7.55" fill="#08306b"/><rect x="174.65" y="496.35" width="7.50" height="7.55" fill="#f7fbff"/><rect x="182.16" y="496.35" width="7.50" height="7.55" fill="#6baed6"/><rect x="189.66" y="496.35" width="7.50" height="7.55" fill="#f7fbff"/><rect x="197.17" y="496.35" width="7.50" height="7.55" fill="#f7fbff"/><rect x="204.68" y="496.35" width="7.50" height="7.55" fill="#f7fbff"/><rect x="212.18" y="496.35" width="7.50" height="7.55" fill="#f7fbff"/><rect x="219.69" y="496.35" width="7.50" height="7.55" fill="#f7fbff"/><rect x="227.19" y="496.35" width="7.50" height="7.55" fill="#deebf7"/><rect x="234.69" y="496.35" width="7.50" height="7.55" fill="#f7fbff"/><rect x="242.20" y="496.35" width="7.50" height="7.55" fill="#f7fbff"/><rect x="249.70" y="496.35" width="7.50" height="7.55" fill="#f7fbff"/><rect x="257.21" y="496.35" width="7.50" height="7.55" fill="#f7fbff"/><rect x="264.72" y="496.35" width="7.50" height="7.55" fill="#6baed6"/><rect x="272.22" y="496.35" width="7.50" height="7.55" fill="#2171b5"/><rect x="279.73" y="496.35" width="7.50" height="7.55" fill="#f7fbff"/><rect x="287.23" y="496.35" width="7.50" height="7.55" fill="#deebf7"/><rect x="294.74" y="496.35" width="7.50" height="7.55" fill="#6baed6"/><rect x="302.24" y="496.35" width="7.50" height="7.55" fill="#f7fbff"/><rect x="309.75" y="496.35" width="7.50" height="7.55" fill="#c6dbef"/><rect x="317.25" y="496.35" width="7.50" height="7.55" fill="#f7fbff"/><rect x="92.10" y="503.90" width="7.50" height="7.55" fill="#f7fbff"/><rect x="99.60" y="503.90" width="7.50" height="7.55" fill="#f7fbff"/><rect x="107.11" y="503.90" width="7.50" height="7.55" fill="#f7fbff"/><rect x="114.61" y="503.90" width="7.50" height="7.55" fill="#f7fbff"/><rect x="122.12" y="503.90" width="7.50" height="7.55" fill="#f7fbff"/><rect x="129.62" y="503.90" width="7.50" height="7.55" fill="#6baed6"/><rect x="137.13" y="503.90" width="7.50" height="7.55" fill="#f7fbff"/><rect x="144.63" y="503.90" width="7.50" height="7.55" fill="#f7fbff"/><rect x="152.14" y="503.90" width="7.50" height="7.55" fill="#f7fbff"/><rect x="159.64" y="503.90" width="7.50" height="7.55" fill="#f7fbff"/><rect x="167.15" y="503.90" width="7.50" height="7.55" fill="#f7fbff"/><rect x="174.65" y="503.90" width="7.50" height="7.55" fill="#f7fbff"/><rect x="182.16" y="503.90" width="7.50" height="7.55" fill="#f7fbff"/><rect x="189.66" y="503.90" width="7.50" height="7.55" fill="#f7fbff"/><rect x="197.17" y="503.90" width="7.50" height="7.55" fill="#f7fbff"/><rect x="204.68" y="503.90" width="7.50" height="7.55" fill="#f7fbff"/><rect x="212.18" y="503.90" width="7.50" height="7.55" fill="#f7fbff"/><rect x="219.69" y="503.90" width="7.50" height="7.55" fill="#f7fbff"/><rect x="227.19" y="503.90" width="7.50" height="7.55" fill="#f7fbff"/><rect x="234.69" y="503.90" width="7.50" height="7.55" fill="#f7fbff"/><rect x="242.20" y="503.90" width="7.50" height="7.55" fill="#f7fbff"/><rect x="249.70" y="503.90" width="7.50" height="7.55" fill="#f7fbff"/><rect x="257.21" y="503.90" width="7.50" height="7.55" fill="#f7fbff"/><rect x="264.72" y="503.90" width="7.50" height="7.55" fill="#f7fbff"/><rect x="272.22" y="503.90" width="7.50" height="7.55" fill="#f7fbff"/><rect x="279.73" y="503.90" width="7.50" height="7.55" fill="#f7fbff"/><rect x="287.23" y="503.90" width="7.50" height="7.55" fill="#f7fbff"/><rect x="294.74" y="503.90" width="7.50" height="7.55" fill="#f7fbff"/><rect x="302.24" y="503.90" width="7.50" height="7.55" fill="#f7fbff"/><rect x="309.75" y="503.90" width="7.50" height="7.55" fill="#f7fbff"/><rect x="317.25" y="503.90" width="7.50" height="7.55" fill="#f7fbff"/><rect x="92.10" y="511.45" width="7.50" height="7.55" fill="#f7fbff"/><rect x="99.60" y="511.45" width="7.50" height="7.55" fill="#f7fbff"/><rect x="107.11" y="511.45" width="7.50" height="7.55" fill="#f7fbff"/><rect x="114.61" y="511.45" width="7.50" height="7.55" fill="#6baed6"/><rect x="122.12" y="511.45" width="7.50" height="7.55" fill="#f7fbff"/><rect x="129.62" y="511.45" width="7.50" height="7.55" fill="#6baed6"/><rect x="137.13" y="511.45" width="7.50" height="7.55" fill="#6baed6"/><rect x="144.63" y="511.45" width="7.50" height="7.55" fill="#6baed6"/><rect x="152.14" y="511.45" width="7.50" height="7.55" fill="#4292c6"/><rect x="159.64" y="511.45" width="7.50" height="7.55" fill="#9ecae1"/><rect x="167.15" y="511.45" width="7.50" height="7.55" fill="#6baed6"/><rect x="174.65" y="511.45" width="7.50" height="7.55" fill="#f7fbff"/><rect x="182.16" y="511.45" width="7.50" height="7.55" fill="#f7fbff"/><rect x="189.66" y="511.45" width="7.50" height="7.55" fill="#f7fbff"/><rect x="197.17" y="511.45" width="7.50" height="7.55" fill="#6baed6"/><rect x="204.68" y="511.45" width="7.50" height="7.55" fill="#f7fbff"/></g>
</svg>

<svg class="a" style="left:0;top:0" width="961" height="724" viewBox="0 0 961 724">
<defs><clipPath id="c1"><rect x="380" y="155" width="571" height="197"/></clipPath><linearGradient id="gb" x1="0" y1="0" x2="0" y2="1"><stop offset="0" stop-color="#000" stop-opacity="0"/><stop offset="1" stop-color="#000" stop-opacity="0.065"/></linearGradient><linearGradient id="gr" x1="0" y1="0" x2="1" y2="0"><stop offset="0" stop-color="#000" stop-opacity="0"/><stop offset="1" stop-color="#000" stop-opacity="0.06"/></linearGradient><clipPath id="c2"><rect x="380" y="385" width="571" height="166"/></clipPath></defs>
<text stroke="#757575" stroke-width="0.3" x="390" y="147" font-size="14" fill="#757575" textLength="188" lengthAdjust="spacingAndGlyphs" font-weight="bold">Выполнение работ на поле</text>
<g clip-path="url(#c1)">
<path d="M380 161.5 H951" stroke="#f0f0f0"/>
<path d="M470.5 161 V352" stroke="#ebebeb"/>
<path d="M560.5 161 V352" stroke="#ebebeb"/>
<path d="M740.5 161 V352" stroke="#ebebeb"/>
<path d="M799.5 161 V352" stroke="#ebebeb"/>
<path d="M851.5 161 V352" stroke="#ebebeb"/>
<path d="M904.5 161 V352" stroke="#ebebeb"/>
<path d="M380 215.8 H951" stroke="#dcdcdc" stroke-width="1.6"/>
<path d="M380 241.5 H951" stroke="#d4d4d4" stroke-width="2"/>
<path d="M380 263 H951" stroke="#eeeeee"/>
<path d="M380 284.5 H951" stroke="#eeeeee"/>
<path d="M380 306 H951" stroke="#eeeeee"/>
<path d="M380 327.5 H951" stroke="#eeeeee"/>
<path d="M380 349 H951" stroke="#eeeeee"/>
<text x="401" y="207.4" font-size="12" fill="#5e5e5e" textLength="27" lengthAdjust="spacingAndGlyphs">День</text>
<path d="M411 215 L415 210 L419 215Z" fill="#8a8a8a"/>
<circle cx="453.3" cy="189.2" r="3.5" fill="none" stroke="#595959" stroke-width="1.2"/><path d="M455.9 191.8 L459 194.9" stroke="#595959" stroke-width="1.5"/>
<text x="475.7" y="207.4" font-size="12" fill="#5e5e5e" textLength="27" lengthAdjust="spacingAndGlyphs">Поле</text>
<circle cx="543.3" cy="189.2" r="3.5" fill="none" stroke="#595959" stroke-width="1.2"/><path d="M545.9 191.8 L549 194.9" stroke="#595959" stroke-width="1.5"/>
<text x="565.2" y="207.4" font-size="12" fill="#5e5e5e" textLength="36" lengthAdjust="spacingAndGlyphs">Работы</text>
<circle cx="723.3" cy="189.2" r="3.5" fill="none" stroke="#595959" stroke-width="1.2"/><path d="M725.9 191.8 L729 194.9" stroke="#595959" stroke-width="1.5"/>
<text x="790.2" y="177" font-size="11.5" fill="#5e5e5e" text-anchor="end" textLength="36.4" lengthAdjust="spacingAndGlyphs">Объем</text>
<text x="790.2" y="191.5" font-size="11.5" fill="#5e5e5e" text-anchor="end" textLength="33" lengthAdjust="spacingAndGlyphs">работ,</text>
<text x="790.2" y="206.4" font-size="11.5" fill="#5e5e5e" text-anchor="end" textLength="27" lengthAdjust="spacingAndGlyphs">Факт</text>
<text x="804.5" y="191.5" font-size="11.5" fill="#5e5e5e" textLength="38.3" lengthAdjust="spacingAndGlyphs">Влаж...</text>
<text x="842.8" y="206.4" font-size="11.5" fill="#5e5e5e" text-anchor="end">%</text>
<text x="894.7" y="206.4" font-size="11.5" fill="#5e5e5e" text-anchor="end" textLength="16.3" lengthAdjust="spacingAndGlyphs">t°C</text>
<text x="908.5" y="206.4" font-size="11.5" fill="#5e5e5e" textLength="47" lengthAdjust="spacingAndGlyphs">Техника</text>
<text x="385" y="233" font-size="12" fill="#404040" textLength="33" lengthAdjust="spacingAndGlyphs" font-weight="bold">Totals</text>
<text x="790.2" y="232.7" font-size="12" fill="#404040" text-anchor="end" textLength="38" lengthAdjust="spacingAndGlyphs" font-weight="bold">21 616</text>
<text x="842.8" y="232" font-size="12" fill="#5e5e5e" text-anchor="end">-</text>
<text x="894.7" y="232" font-size="12" fill="#5e5e5e" text-anchor="end">-</text>
<text x="461.7" y="256.2" font-size="13" fill="#5e5e5e" text-anchor="end" textLength="61" lengthAdjust="spacingAndGlyphs" font-family="Liberation Mono">24.07.2017</text>
<text x="475.8" y="256.2" font-size="12" fill="#5e5e5e" textLength="46.7" lengthAdjust="spacingAndGlyphs">Поле_18</text>
<text x="565" y="256.2" font-size="12" fill="#5e5e5e" textLength="51" lengthAdjust="spacingAndGlyphs">Лущення</text>
<text x="791.3" y="256.2" font-size="12.5" fill="#5e5e5e" text-anchor="end" font-family="Liberation Mono">5</text>
<text x="843" y="256.2" font-size="12.5" fill="#5e5e5e" text-anchor="end" font-family="Liberation Mono">64</text>
<text x="895.9" y="256.2" font-size="12.5" fill="#5e5e5e" text-anchor="end" font-family="Liberation Mono">21</text>
<text x="909.1" y="256.2" font-size="12" fill="#5e5e5e" textLength="46" lengthAdjust="spacingAndGlyphs">Трактор</text>
<text x="461.7" y="277.7" font-size="13" fill="#5e5e5e" text-anchor="end" textLength="61" lengthAdjust="spacingAndGlyphs" font-family="Liberation Mono">25.07.2017</text>
<text x="475.8" y="277.7" font-size="12" fill="#5e5e5e" textLength="46.7" lengthAdjust="spacingAndGlyphs">Поле_18</text>
<text x="565" y="277.7" font-size="12" fill="#5e5e5e" textLength="51" lengthAdjust="spacingAndGlyphs">Лущення</text>
<text x="791.3" y="277.7" font-size="12.5" fill="#5e5e5e" text-anchor="end" font-family="Liberation Mono">47</text>
<text x="843" y="277.7" font-size="12.5" fill="#5e5e5e" text-anchor="end" font-family="Liberation Mono">51</text>
<text x="895.9" y="277.7" font-size="12.5" fill="#5e5e5e" text-anchor="end" font-family="Liberation Mono">24</text>
<text x="909.1" y="277.7" font-size="12" fill="#5e5e5e" textLength="46" lengthAdjust="spacingAndGlyphs">Трактор</text>
<text x="461.7" y="299.2" font-size="13" fill="#5e5e5e" text-anchor="end" textLength="61" lengthAdjust="spacingAndGlyphs" font-family="Liberation Mono">26.07.2017</text>
<text x="475.8" y="299.2" font-size="12" fill="#5e5e5e" textLength="46.7" lengthAdjust="spacingAndGlyphs">Поле_18</text>
<text x="565" y="299.2" font-size="12" fill="#5e5e5e" textLength="51" lengthAdjust="spacingAndGlyphs">Лущення</text>
<text x="791.3" y="299.2" font-size="12.5" fill="#5e5e5e" text-anchor="end" font-family="Liberation Mono">26</text>
<text x="843" y="299.2" font-size="12.5" fill="#5e5e5e" text-anchor="end" font-family="Liberation Mono">58</text>
<text x="895.9" y="299.2" font-size="12.5" fill="#5e5e5e" text-anchor="end" font-family="Liberation Mono">25</text>
<text x="909.1" y="299.2" font-size="12" fill="#5e5e5e" textLength="46" lengthAdjust="spacingAndGlyphs">Трактор</text>
<text x="461.7" y="320.7" font-size="13" fill="#5e5e5e" text-anchor="end" textLength="61" lengthAdjust="spacingAndGlyphs" font-family="Liberation Mono">26.07.2017</text>
<text x="475.8" y="320.7" font-size="12" fill="#5e5e5e" textLength="46.7" lengthAdjust="spacingAndGlyphs">Поле_42</text>
<text x="565" y="320.7" font-size="12" fill="#5e5e5e" textLength="51" lengthAdjust="spacingAndGlyphs">Лущення</text>
<text x="791.3" y="320.7" font-size="12.5" fill="#5e5e5e" text-anchor="end" font-family="Liberation Mono">18</text>
<text x="843" y="320.7" font-size="12.5" fill="#5e5e5e" text-anchor="end" font-family="Liberation Mono">67</text>
<text x="895.9" y="320.7" font-size="12.5" fill="#5e5e5e" text-anchor="end" font-family="Liberation Mono">24</text>
<text x="909.1" y="320.7" font-size="12" fill="#5e5e5e" textLength="46" lengthAdjust="spacingAndGlyphs">Трактор</text>
<text x="461.7" y="342.2" font-size="13" fill="#5e5e5e" text-anchor="end" textLength="61" lengthAdjust="spacingAndGlyphs" font-family="Liberation Mono">26.07.2017</text>
<text x="475.8" y="342.2" font-size="12" fill="#5e5e5e" textLength="46.7" lengthAdjust="spacingAndGlyphs">Поле_19</text>
<text x="565" y="342.2" font-size="12" fill="#5e5e5e" textLength="51" lengthAdjust="spacingAndGlyphs">Лущення</text>
<text x="791.3" y="342.2" font-size="12.5" fill="#5e5e5e" text-anchor="end" font-family="Liberation Mono">12</text>
<text x="843" y="342.2" font-size="12.5" fill="#5e5e5e" text-anchor="end" font-family="Liberation Mono">58</text>
<text x="895.9" y="342.2" font-size="12.5" fill="#5e5e5e" text-anchor="end" font-family="Liberation Mono">25</text>
<text x="909.1" y="342.2" font-size="12" fill="#5e5e5e" textLength="46" lengthAdjust="spacingAndGlyphs">Трактор</text>
<rect x="380" y="334" width="571" height="18" fill="url(#gb)"/>
<rect x="936" y="242" width="15" height="110" fill="url(#gr)"/>
</g>
<text stroke="#757575" stroke-width="0.3" x="390" y="377" font-size="14" fill="#757575" textLength="200" lengthAdjust="spacingAndGlyphs" font-weight="bold">Использование ТМЦ на поле</text>
<g clip-path="url(#c2)">
<path d="M380 390.5 H951" stroke="#f0f0f0"/>
<path d="M469.5 390 V551" stroke="#ebebeb"/>
<path d="M559.5 390 V551" stroke="#ebebeb"/>
<path d="M854.5 390 V551" stroke="#ebebeb"/>
<path d="M933.5 390 V551" stroke="#ebebeb"/>
<path d="M380 446.3 H951" stroke="#dcdcdc" stroke-width="1.6"/>
<path d="M380 471.5 H951" stroke="#d4d4d4" stroke-width="2"/>
<path d="M380 493 H951" stroke="#eeeeee"/>
<path d="M380 514.5 H951" stroke="#eeeeee"/>
<path d="M380 536 H951" stroke="#eeeeee"/>
<text x="400.3" y="438.5" font-size="12" fill="#5e5e5e" textLength="27" lengthAdjust="spacingAndGlyphs">День</text>
<path d="M410 445.5 L414.3 440 L418.6 445.5Z" fill="#8a8a8a"/>
<circle cx="452.3" cy="418.7" r="3.5" fill="none" stroke="#595959" stroke-width="1.2"/><path d="M454.9 421.3 L458 424.4" stroke="#595959" stroke-width="1.5"/>
<text x="475" y="438.5" font-size="12" fill="#5e5e5e" textLength="27" lengthAdjust="spacingAndGlyphs">Поле</text>
<circle cx="542.3" cy="418.7" r="3.5" fill="none" stroke="#595959" stroke-width="1.2"/><path d="M544.9 421.3 L548 424.4" stroke="#595959" stroke-width="1.5"/>
<text x="565" y="438.5" font-size="12" fill="#5e5e5e" textLength="36" lengthAdjust="spacingAndGlyphs">Работы</text>
<circle cx="836.8" cy="418.7" r="3.5" fill="none" stroke="#595959" stroke-width="1.2"/><path d="M839.4 421.3 L842.5 424.4" stroke="#595959" stroke-width="1.5"/>
<text x="924.7" y="407.9" font-size="11.5" fill="#5e5e5e" text-anchor="end" textLength="65.2" lengthAdjust="spacingAndGlyphs">Количество</text>
<text x="924.7" y="422.8" font-size="11.5" fill="#5e5e5e" text-anchor="end" textLength="37.8" lengthAdjust="spacingAndGlyphs">затрат,</text>
<text x="924.7" y="437.7" font-size="11.5" fill="#5e5e5e" text-anchor="end" textLength="26.7" lengthAdjust="spacingAndGlyphs">Факт</text>
<text x="937.9" y="437.7" font-size="11.5" fill="#5e5e5e">Ма</text>
<text x="385.5" y="462" font-size="12" fill="#404040" textLength="33" lengthAdjust="spacingAndGlyphs" font-weight="bold">Totals</text>
<text x="924.7" y="462" font-size="12" fill="#404040" text-anchor="end" textLength="39" lengthAdjust="spacingAndGlyphs" font-weight="bold">86 460</text>
<text x="460.6" y="485.7" font-size="13" fill="#5e5e5e" text-anchor="end" textLength="61" lengthAdjust="spacingAndGlyphs" font-family="Liberation Mono">31.07.2017</text>
<text x="475" y="485.7" font-size="12" fill="#5e5e5e" textLength="46.7" lengthAdjust="spacingAndGlyphs">Поле_18</text>
<text x="565" y="485.7" font-size="12" fill="#5e5e5e" textLength="51" lengthAdjust="spacingAndGlyphs">Лущення</text>
<text x="924.7" y="485.7" font-size="12.5" fill="#5e5e5e" text-anchor="end" font-family="Liberation Mono">388</text>
<text x="938" y="485.7" font-size="12" fill="#5e5e5e">Ди</text>
<text x="460.6" y="507.2" font-size="13" fill="#5e5e5e" text-anchor="end" textLength="61" lengthAdjust="spacingAndGlyphs" font-family="Liberation Mono">31.07.2017</text>
<text x="475" y="507.2" font-size="12" fill="#5e5e5e" textLength="46.7" lengthAdjust="spacingAndGlyphs">Поле_28</text>
<text x="565" y="507.2" font-size="12" fill="#5e5e5e" textLength="51" lengthAdjust="spacingAndGlyphs">Лущення</text>
<text x="924.7" y="507.2" font-size="12.5" fill="#5e5e5e" text-anchor="end" font-family="Liberation Mono">280</text>
<text x="938" y="507.2" font-size="12" fill="#5e5e5e">Ди</text>
<text x="460.6" y="528.7" font-size="13" fill="#5e5e5e" text-anchor="end" textLength="61" lengthAdjust="spacingAndGlyphs" font-family="Liberation Mono">31.07.2017</text>
<text x="475" y="528.7" font-size="12" fill="#5e5e5e" textLength="46.7" lengthAdjust="spacingAndGlyphs">Поле_42</text>
<text x="565" y="528.7" font-size="12" fill="#5e5e5e" textLength="51" lengthAdjust="spacingAndGlyphs">Лущення</text>
<text x="924.7" y="528.7" font-size="12.5" fill="#5e5e5e" text-anchor="end" font-family="Liberation Mono">170</text>
<text x="938" y="528.7" font-size="12" fill="#5e5e5e">Ди</text>
<text x="460.6" y="550.2" font-size="13" fill="#5e5e5e" text-anchor="end" textLength="61" lengthAdjust="spacingAndGlyphs" font-family="Liberation Mono">31.07.2017</text>
<text x="475" y="550.2" font-size="12" fill="#5e5e5e" textLength="46.7" lengthAdjust="spacingAndGlyphs">Поле_36</text>
<text x="565" y="550.2" font-size="12" fill="#5e5e5e" textLength="51" lengthAdjust="spacingAndGlyphs">Лущення</text>
<text x="924.7" y="550.2" font-size="12.5" fill="#5e5e5e" text-anchor="end" font-family="Liberation Mono">140</text>
<text x="938" y="550.2" font-size="12" fill="#5e5e5e">Ди</text>
<rect x="380" y="534" width="571" height="17" fill="url(#gb)"/>
<rect x="936" y="472" width="15" height="79" fill="url(#gr)"/>
</g>
</svg>

<!-- line chart -->
<svg class="a" style="left:0;top:540px" width="961" height="184" viewBox="0 540 961 184">
  <g stroke="#e3e3e3" stroke-width="1">
    <path d="M179.5 561 V659 M383.5 561 V659 M580.5 561 V659 M780.5 561 V659"/>
  </g>
  <polygon points="105.0,643.1 105.0,602.1 106.1,574.0 114.4,568.7 116.0,585.4 119.0,565.6 120.2,609.7 123.6,564.9 125.1,574.8 127.4,565.9 129.6,567.9 132.4,567.2 133.1,615.8 138.8,619.6 141.0,567.2 144.1,571.7 145.6,591.5 147.9,569.4 149.4,620.3 151.7,623.4 155.5,605.2 158.5,617.3 160.8,620.3 163.1,565.6 164.6,564.1 165.7,574.8 166.9,567.2 169.1,614.3 170.7,615.8 173.7,582.4 176.7,615.8 179.0,600.6 185.1,571.7 185.9,612.8 186.6,577.8 188.1,603.6 189.7,564.1 195.7,567.2 197.3,564.9 200.3,567.2 203.3,614.3 205.6,588.4 207.6,603.6 211.7,564.1 213.2,582.4 216.5,571.7 218.3,561.8 220.3,561.1 221.1,595.3 223.4,567.2 224.9,576.3 226.9,563.4 229.4,571.7 232.5,586.9 236.3,567.2 240.1,561.8 242.8,599.1 243.9,568.7 245.4,579.3 246.9,574.8 249.2,599.1 251.5,573.2 253.0,577.8 255.3,565.6 256.8,577.8 260.3,583.9 263.6,567.2 268.2,561.8 272.8,565.6 274.3,577.8 277.3,561.8 278.8,574.8 282.6,595.3 284.1,561.8 286.4,567.2 288.7,562.6 290.2,567.2 294.0,579.3 296.3,566.4 297.8,592.2 300.1,565.6 302.4,571.7 304.7,565.6 308.5,583.9 310.0,569.4 313.0,561.8 316.1,569.4 319.9,561.8 322.1,582.4 325.9,572.5 331.5,562.6 336.1,565.6 339.4,583.1 343.4,561.8 346.0,565.6 347.0,562.6 349.0,574.0 352.5,564.1 355.1,583.1 356.6,570.2 360.4,569.4 361.9,579.3 365.7,564.9 370.7,591.5 374.1,561.8 377.1,588.4 378.6,563.4 382.4,564.9 386.5,568.7 390.8,564.1 392.3,574.8 393.8,561.8 397.6,571.7 401.1,603.6 402.9,569.4 406.7,571.7 408.3,581.6 413.6,577.8 414.3,599.1 417.4,568.7 419.7,561.8 421.9,577.0 427.3,564.9 428.8,576.3 434.6,594.5 437.6,567.2 440.9,583.1 449.6,593.0 451.1,571.7 454.9,561.8 457.2,566.4 460.5,599.8 464.0,570.2 468.6,561.8 473.1,581.6 476.9,578.6 478.4,586.2 485.7,561.8 487.6,574.8 489.8,581.6 492.9,574.0 493.6,596.0 497.4,579.3 500.0,593.0 501.5,569.4 502.8,576.3 505.8,575.5 506.6,594.5 511.1,573.2 512.6,569.4 514.9,574.0 517.6,561.8 522.5,602.1 527.1,561.8 531.6,561.1 533.4,582.4 534.7,561.8 536.9,565.6 539.5,589.2 543.8,564.9 546.1,566.4 548.0,561.8 549.1,571.7 552.9,575.5 558.2,594.5 561.5,579.3 563.8,608.2 565.3,565.6 566.4,596.0 567.6,565.6 568.4,596.0 569.9,561.8 572.9,580.1 578.2,565.6 581.3,614.3 587.4,577.0 588.4,615.8 589.6,569.4 596.5,577.8 597.2,618.1 598.8,577.8 599.8,621.9 602.9,574.0 604.1,620.3 607.9,604.4 612.4,616.6 614.0,580.1 617.0,624.9 618.5,593.0 619.3,614.3 622.3,580.1 624.6,584.6 626.1,624.9 633.7,568.7 636.0,615.8 638.3,567.2 640.5,568.7 647.4,621.9 648.9,583.1 651.9,621.9 657.3,600.6 659.5,577.0 666.4,579.3 667.9,618.8 670.9,586.2 671.7,624.1 677.3,564.1 678.8,612.8 679.6,571.7 680.8,615.8 684.1,564.9 687.9,577.0 689.4,571.7 693.2,564.1 697.8,617.3 699.3,575.5 706.2,587.7 706.9,621.9 708.4,590.0 710.7,621.9 713.8,622.6 716.8,578.6 718.3,621.9 721.4,563.4 724.4,614.3 726.7,618.8 728.2,584.6 729.0,621.9 734.3,570.2 737.3,620.3 743.4,566.4 747.2,619.6 750.2,568.7 752.5,620.3 754.8,574.0 757.1,620.3 759.3,573.2 761.6,618.1 763.4,564.9 767.7,567.9 768.5,615.8 770.0,574.0 773.0,572.5 775.3,602.1 779.1,565.6 779.9,589.2 787.5,568.7 788.2,613.5 789.7,576.3 792.7,615.5 796.2,568.3 798.9,610.2 801.6,612.8 805.1,564.8 806.9,583.5 808.7,584.4 810.5,608.4 814.0,566.6 816.7,578.1 820.2,563.0 822.9,603.0 829.1,568.3 830.9,605.7 834.5,601.3 836.3,565.7 838.0,564.8 838.9,593.3 840.7,564.8 847.8,610.2 848.7,582.6 853.2,571.0 854.1,613.7 856.7,569.2 858.5,597.7 860.3,566.6 861.2,572.8 866.5,571.9 867.4,617.3 875.4,572.8 879.0,619.1 879.9,602.2 881.6,615.5 884.3,574.6 888.8,583.5 890.5,620.8 895.9,569.2 897.7,622.6 899.4,585.2 907.4,619.1 915.4,570.1 918.1,615.5 919.0,584.4 920.8,624.4 921.7,595.0 926.1,590.6 930.6,616.4 935.0,570.1 939.5,563.0 940.4,569.2 943.0,563.9 946.6,609.3 948.4,566.6 949.8,571.9 949.8,643.1" fill="#d7e8f3"/>
  <polygon points="105.0,643.1 105.0,625.2 109.1,629.5 114.4,635.5 116.7,630.2 119.0,634.0 120.5,621.1 122.8,629.5 125.1,634.0 127.4,635.5 129.6,631.0 131.9,635.5 133.1,622.6 135.7,621.9 139.8,618.1 143.3,634.0 145.6,632.5 147.9,634.8 150.2,617.3 152.4,621.1 155.5,629.5 159.6,616.6 161.6,618.8 163.1,634.0 165.3,632.5 168.4,625.7 173.7,639.3 176.7,632.5 180.5,637.8 184.3,643.1 185.9,632.5 187.4,639.3 188.1,634.0 189.7,637.8 197.3,636.3 200.3,642.4 204.1,630.2 206.4,629.5 209.4,632.5 212.5,629.5 214.0,637.8 217.3,637.8 220.8,626.4 222.6,633.3 226.9,634.8 228.7,644.7 231.0,640.9 234.8,641.6 238.6,637.8 243.1,634.0 245.4,640.9 248.4,643.1 250.7,637.8 253.8,634.8 257.6,636.3 260.6,639.3 265.2,638.6 269.7,638.6 273.5,634.8 275.0,643.1 275.8,637.1 281.9,638.6 284.1,646.9 287.2,641.6 289.5,639.3 292.5,644.7 297.1,643.1 299.3,647.7 302.4,643.1 305.4,640.1 306.9,644.7 309.2,643.9 312.3,643.1 315.3,635.5 319.1,635.5 322.9,642.4 325.2,645.4 331.5,642.4 334.6,637.1 336.8,644.7 339.4,637.8 342.2,639.3 348.2,634.0 350.5,640.9 352.0,637.8 355.1,643.9 360.4,646.9 363.4,644.7 365.7,641.6 370.3,634.8 373.3,642.4 376.4,636.3 378.6,640.1 382.4,642.4 386.2,641.6 390.0,642.4 392.3,639.3 393.8,641.6 396.9,637.8 401.4,642.4 402.9,646.9 408.3,644.7 413.6,653.0 418.1,643.9 421.2,641.6 423.5,644.7 427.3,647.7 430.3,646.2 434.9,649.2 436.4,656.8 438.7,653.8 444.0,643.9 448.8,641.6 451.1,646.2 455.6,640.1 457.2,637.8 459.4,641.6 464.8,648.9 468.6,640.9 473.9,642.4 480.0,647.7 486.0,643.9 488.3,643.1 490.6,647.7 494.4,643.9 497.4,646.2 501.2,644.7 505.8,657.6 508.8,650.0 511.9,653.8 514.9,659.9 516.4,643.1 517.9,647.7 519.5,654.5 522.5,646.2 527.1,643.1 530.1,643.9 534.7,640.1 537.7,639.3 542.3,643.1 546.1,639.3 549.1,637.1 551.4,643.1 552.9,650.0 557.5,647.7 562.3,644.7 563.8,647.7 565.3,642.4 566.8,649.2 568.4,642.4 571.4,640.1 575.2,639.3 579.0,640.1 581.3,627.2 584.3,639.3 585.8,641.6 588.1,629.5 589.6,641.6 595.7,642.4 597.2,627.9 598.8,639.3 600.3,626.4 601.8,636.3 604.1,623.4 607.1,627.9 608.6,625.7 612.4,625.7 614.7,637.8 617.0,627.9 618.5,632.5 620.0,629.5 624.6,638.6 626.1,625.7 629.9,634.0 631.4,637.8 636.7,621.1 639.8,639.3 647.4,621.1 649.7,627.2 652.7,619.6 656.5,619.6 657.3,624.9 659.5,629.5 666.4,632.5 667.9,624.9 670.2,638.6 673.2,626.4 676.5,634.8 678.0,621.9 678.8,634.8 680.8,622.6 683.4,631.0 686.4,629.5 688.7,630.2 691.0,637.8 693.2,636.3 698.6,620.3 700.8,631.0 706.2,635.5 707.7,624.1 709.2,630.2 713.8,619.6 716.8,637.8 719.1,623.4 721.4,633.3 724.4,620.3 726.7,625.7 728.2,637.8 729.0,626.4 729.7,634.0 735.0,629.5 738.1,621.9 739.6,629.5 742.6,627.2 746.4,617.3 749.5,620.3 752.5,631.0 754.8,619.6 757.1,629.5 757.8,618.8 759.3,627.9 762.4,617.3 767.7,634.8 769.2,624.9 770.7,632.5 775.3,619.6 779.9,626.4 785.9,634.8 789.7,622.6 792.7,619.9 796.2,630.6 800.7,619.1 803.3,629.7 806.0,627.1 809.6,621.7 813.1,630.6 818.5,623.5 820.2,628.0 822.9,620.8 828.3,626.2 830.9,619.9 834.5,619.9 835.4,627.1 838.0,626.2 838.9,619.9 839.8,628.0 847.8,617.3 851.4,628.0 854.1,619.1 855.8,628.8 858.5,619.1 861.2,622.6 864.7,632.4 868.3,622.6 872.7,633.3 877.2,622.6 879.0,617.3 882.5,617.3 884.3,627.1 887.9,629.7 889.6,618.2 893.2,619.1 896.8,634.2 899.4,622.6 900.3,633.3 908.3,618.2 910.1,630.6 917.2,617.3 920.8,617.3 921.7,630.6 930.6,622.6 934.1,632.4 939.5,628.0 942.1,632.4 946.6,620.8 949.8,628.8 949.8,643.1" fill="rgba(245,160,48,0.32)"/>
  <polyline points="105.0,602.1 106.1,574.0 114.4,568.7 116.0,585.4 119.0,565.6 120.2,609.7 123.6,564.9 125.1,574.8 127.4,565.9 129.6,567.9 132.4,567.2 133.1,615.8 138.8,619.6 141.0,567.2 144.1,571.7 145.6,591.5 147.9,569.4 149.4,620.3 151.7,623.4 155.5,605.2 158.5,617.3 160.8,620.3 163.1,565.6 164.6,564.1 165.7,574.8 166.9,567.2 169.1,614.3 170.7,615.8 173.7,582.4 176.7,615.8 179.0,600.6 185.1,571.7 185.9,612.8 186.6,577.8 188.1,603.6 189.7,564.1 195.7,567.2 197.3,564.9 200.3,567.2 203.3,614.3 205.6,588.4 207.6,603.6 211.7,564.1 213.2,582.4 216.5,571.7 218.3,561.8 220.3,561.1 221.1,595.3 223.4,567.2 224.9,576.3 226.9,563.4 229.4,571.7 232.5,586.9 236.3,567.2 240.1,561.8 242.8,599.1 243.9,568.7 245.4,579.3 246.9,574.8 249.2,599.1 251.5,573.2 253.0,577.8 255.3,565.6 256.8,577.8 260.3,583.9 263.6,567.2 268.2,561.8 272.8,565.6 274.3,577.8 277.3,561.8 278.8,574.8 282.6,595.3 284.1,561.8 286.4,567.2 288.7,562.6 290.2,567.2 294.0,579.3 296.3,566.4 297.8,592.2 300.1,565.6 302.4,571.7 304.7,565.6 308.5,583.9 310.0,569.4 313.0,561.8 316.1,569.4 319.9,561.8 322.1,582.4 325.9,572.5 331.5,562.6 336.1,565.6 339.4,583.1 343.4,561.8 346.0,565.6 347.0,562.6 349.0,574.0 352.5,564.1 355.1,583.1 356.6,570.2 360.4,569.4 361.9,579.3 365.7,564.9 370.7,591.5 374.1,561.8 377.1,588.4 378.6,563.4 382.4,564.9 386.5,568.7 390.8,564.1 392.3,574.8 393.8,561.8 397.6,571.7 401.1,603.6 402.9,569.4 406.7,571.7 408.3,581.6 413.6,577.8 414.3,599.1 417.4,568.7 419.7,561.8 421.9,577.0 427.3,564.9 428.8,576.3 434.6,594.5 437.6,567.2 440.9,583.1 449.6,593.0 451.1,571.7 454.9,561.8 457.2,566.4 460.5,599.8 464.0,570.2 468.6,561.8 473.1,581.6 476.9,578.6 478.4,586.2 485.7,561.8 487.6,574.8 489.8,581.6 492.9,574.0 493.6,596.0 497.4,579.3 500.0,593.0 501.5,569.4 502.8,576.3 505.8,575.5 506.6,594.5 511.1,573.2 512.6,569.4 514.9,574.0 517.6,561.8 522.5,602.1 527.1,561.8 531.6,561.1 533.4,582.4 534.7,561.8 536.9,565.6 539.5,589.2 543.8,564.9 546.1,566.4 548.0,561.8 549.1,571.7 552.9,575.5 558.2,594.5 561.5,579.3 563.8,608.2 565.3,565.6 566.4,596.0 567.6,565.6 568.4,596.0 569.9,561.8 572.9,580.1 578.2,565.6 581.3,614.3 587.4,577.0 588.4,615.8 589.6,569.4 596.5,577.8 597.2,618.1 598.8,577.8 599.8,621.9 602.9,574.0 604.1,620.3 607.9,604.4 612.4,616.6 614.0,580.1 617.0,624.9 618.5,593.0 619.3,614.3 622.3,580.1 624.6,584.6 626.1,624.9 633.7,568.7 636.0,615.8 638.3,567.2 640.5,568.7 647.4,621.9 648.9,583.1 651.9,621.9 657.3,600.6 659.5,577.0 666.4,579.3 667.9,618.8 670.9,586.2 671.7,624.1 677.3,564.1 678.8,612.8 679.6,571.7 680.8,615.8 684.1,564.9 687.9,577.0 689.4,571.7 693.2,564.1 697.8,617.3 699.3,575.5 706.2,587.7 706.9,621.9 708.4,590.0 710.7,621.9 713.8,622.6 716.8,578.6 718.3,621.9 721.4,563.4 724.4,614.3 726.7,618.8 728.2,584.6 729.0,621.9 734.3,570.2 737.3,620.3 743.4,566.4 747.2,619.6 750.2,568.7 752.5,620.3 754.8,574.0 757.1,620.3 759.3,573.2 761.6,618.1 763.4,564.9 767.7,567.9 768.5,615.8 770.0,574.0 773.0,572.5 775.3,602.1 779.1,565.6 779.9,589.2 787.5,568.7 788.2,613.5 789.7,576.3 792.7,615.5 796.2,568.3 798.9,610.2 801.6,612.8 805.1,564.8 806.9,583.5 808.7,584.4 810.5,608.4 814.0,566.6 816.7,578.1 820.2,563.0 822.9,603.0 829.1,568.3 830.9,605.7 834.5,601.3 836.3,565.7 838.0,564.8 838.9,593.3 840.7,564.8 847.8,610.2 848.7,582.6 853.2,571.0 854.1,613.7 856.7,569.2 858.5,597.7 860.3,566.6 861.2,572.8 866.5,571.9 867.4,617.3 875.4,572.8 879.0,619.1 879.9,602.2 881.6,615.5 884.3,574.6 888.8,583.5 890.5,620.8 895.9,569.2 897.7,622.6 899.4,585.2 907.4,619.1 915.4,570.1 918.1,615.5 919.0,584.4 920.8,624.4 921.7,595.0 926.1,590.6 930.6,616.4 935.0,570.1 939.5,563.0 940.4,569.2 943.0,563.9 946.6,609.3 948.4,566.6 949.8,571.9" fill="none" stroke="#6fb0d9" stroke-width="0.9"/>
  <polyline points="105.0,625.2 109.1,629.5 114.4,635.5 116.7,630.2 119.0,634.0 120.5,621.1 122.8,629.5 125.1,634.0 127.4,635.5 129.6,631.0 131.9,635.5 133.1,622.6 135.7,621.9 139.8,618.1 143.3,634.0 145.6,632.5 147.9,634.8 150.2,617.3 152.4,621.1 155.5,629.5 159.6,616.6 161.6,618.8 163.1,634.0 165.3,632.5 168.4,625.7 173.7,639.3 176.7,632.5 180.5,637.8 184.3,643.1 185.9,632.5 187.4,639.3 188.1,634.0 189.7,637.8 197.3,636.3 200.3,642.4 204.1,630.2 206.4,629.5 209.4,632.5 212.5,629.5 214.0,637.8 217.3,637.8 220.8,626.4 222.6,633.3 226.9,634.8 228.7,644.7 231.0,640.9 234.8,641.6 238.6,637.8 243.1,634.0 245.4,640.9 248.4,643.1 250.7,637.8 253.8,634.8 257.6,636.3 260.6,639.3 265.2,638.6 269.7,638.6 273.5,634.8 275.0,643.1 275.8,637.1 281.9,638.6 284.1,646.9 287.2,641.6 289.5,639.3 292.5,644.7 297.1,643.1 299.3,647.7 302.4,643.1 305.4,640.1 306.9,644.7 309.2,643.9 312.3,643.1 315.3,635.5 319.1,635.5 322.9,642.4 325.2,645.4 331.5,642.4 334.6,637.1 336.8,644.7 339.4,637.8 342.2,639.3 348.2,634.0 350.5,640.9 352.0,637.8 355.1,643.9 360.4,646.9 363.4,644.7 365.7,641.6 370.3,634.8 373.3,642.4 376.4,636.3 378.6,640.1 382.4,642.4 386.2,641.6 390.0,642.4 392.3,639.3 393.8,641.6 396.9,637.8 401.4,642.4 402.9,646.9 408.3,644.7 413.6,653.0 418.1,643.9 421.2,641.6 423.5,644.7 427.3,647.7 430.3,646.2 434.9,649.2 436.4,656.8 438.7,653.8 444.0,643.9 448.8,641.6 451.1,646.2 455.6,640.1 457.2,637.8 459.4,641.6 464.8,648.9 468.6,640.9 473.9,642.4 480.0,647.7 486.0,643.9 488.3,643.1 490.6,647.7 494.4,643.9 497.4,646.2 501.2,644.7 505.8,657.6 508.8,650.0 511.9,653.8 514.9,659.9 516.4,643.1 517.9,647.7 519.5,654.5 522.5,646.2 527.1,643.1 530.1,643.9 534.7,640.1 537.7,639.3 542.3,643.1 546.1,639.3 549.1,637.1 551.4,643.1 552.9,650.0 557.5,647.7 562.3,644.7 563.8,647.7 565.3,642.4 566.8,649.2 568.4,642.4 571.4,640.1 575.2,639.3 579.0,640.1 581.3,627.2 584.3,639.3 585.8,641.6 588.1,629.5 589.6,641.6 595.7,642.4 597.2,627.9 598.8,639.3 600.3,626.4 601.8,636.3 604.1,623.4 607.1,627.9 608.6,625.7 612.4,625.7 614.7,637.8 617.0,627.9 618.5,632.5 620.0,629.5 624.6,638.6 626.1,625.7 629.9,634.0 631.4,637.8 636.7,621.1 639.8,639.3 647.4,621.1 649.7,627.2 652.7,619.6 656.5,619.6 657.3,624.9 659.5,629.5 666.4,632.5 667.9,624.9 670.2,638.6 673.2,626.4 676.5,634.8 678.0,621.9 678.8,634.8 680.8,622.6 683.4,631.0 686.4,629.5 688.7,630.2 691.0,637.8 693.2,636.3 698.6,620.3 700.8,631.0 706.2,635.5 707.7,624.1 709.2,630.2 713.8,619.6 716.8,637.8 719.1,623.4 721.4,633.3 724.4,620.3 726.7,625.7 728.2,637.8 729.0,626.4 729.7,634.0 735.0,629.5 738.1,621.9 739.6,629.5 742.6,627.2 746.4,617.3 749.5,620.3 752.5,631.0 754.8,619.6 757.1,629.5 757.8,618.8 759.3,627.9 762.4,617.3 767.7,634.8 769.2,624.9 770.7,632.5 775.3,619.6 779.9,626.4 785.9,634.8 789.7,622.6 792.7,619.9 796.2,630.6 800.7,619.1 803.3,629.7 806.0,627.1 809.6,621.7 813.1,630.6 818.5,623.5 820.2,628.0 822.9,620.8 828.3,626.2 830.9,619.9 834.5,619.9 835.4,627.1 838.0,626.2 838.9,619.9 839.8,628.0 847.8,617.3 851.4,628.0 854.1,619.1 855.8,628.8 858.5,619.1 861.2,622.6 864.7,632.4 868.3,622.6 872.7,633.3 877.2,622.6 879.0,617.3 882.5,617.3 884.3,627.1 887.9,629.7 889.6,618.2 893.2,619.1 896.8,634.2 899.4,622.6 900.3,633.3 908.3,618.2 910.1,630.6 917.2,617.3 920.8,617.3 921.7,630.6 930.6,622.6 934.1,632.4 939.5,628.0 942.1,632.4 946.6,620.8 949.8,628.8" fill="none" stroke="#f39a22" stroke-width="1.1"/>
  <polyline points="105.0,643.1 121.0,643.1 122.5,640.5 124.0,643.1 128.0,643.1 129.5,641.0 131.0,643.1 163.0,643.1 164.5,638.0 166.0,643.1 197.3,643.1 198.8,641.0 200.3,643.1 238.5,643.1 240.0,641.0 241.5,643.1 271.0,643.1 272.5,642.0 274.0,643.1 315.5,643.1 317.0,638.5 318.5,643.1 334.5,643.1 336.0,641.0 337.5,643.1 350.5,643.1 352.0,637.0 353.5,643.1 419.5,643.1 421.0,640.5 422.5,643.1 466.0,643.1 467.5,640.5 469.0,643.1 511.0,643.1 512.5,639.0 514.0,643.1 523.5,643.1 525.0,641.0 526.5,643.1 551.5,643.1 553.0,639.0 554.5,643.1 636.0,643.1 637.5,641.5 639.0,643.1 673.5,643.1 675.0,641.0 676.5,643.1 683.5,643.1 685.0,641.5 686.5,643.1 739.5,643.1 741.0,640.5 742.5,643.1 748.0,643.1 749.5,641.0 751.0,643.1 801.5,643.1 803.0,622.5 804.5,643.1 833.5,643.1 835.0,629.5 836.5,643.1 841.0,643.1 842.5,641.0 844.0,643.1 861.0,643.1 862.5,641.0 864.0,643.1 934.5,643.1 936.0,638.8 937.5,643.1 950.0,643.1" fill="none" stroke="#3d6ea8" stroke-width="1.05"/>
  <path d="M104.5 560.5 H950 M104.5 659.5 H950" stroke="#d0d0d0" stroke-width="1"/>
  <path d="M104.5 560.5 V660" stroke="#d0d0d0" stroke-width="1"/>
  <path d="M96 561.5 H104 M96 643.5 H104 M96 659.5 H104" stroke="#d0d0d0" stroke-width="1"/>
  <path d="M179.5 669 V691 M383.5 669 V691 M580.5 669 V691 M780.5 669 V691" stroke="#e6e6e6" stroke-width="1"/>
  <path d="M511 662.5 H519 L515 668Z" fill="#8a8a8a"/>
  <g font-family="Liberation Mono" font-size="12" fill="#595959">
    <text x="92.8" y="571" text-anchor="end" textLength="19" lengthAdjust="spacingAndGlyphs">100</text>
    <text x="92.5" y="647.5" text-anchor="end">0</text>
    <text x="92.5" y="662.5" text-anchor="end" textLength="16" lengthAdjust="spacingAndGlyphs">-20</text>
    <text x="183.5" y="684" textLength="59" lengthAdjust="spacingAndGlyphs" font-size="13">01.10.2017</text>
    <text x="386.2" y="684" textLength="59" lengthAdjust="spacingAndGlyphs" font-size="13">01.01.2018</text>
    <text x="583.8" y="684" textLength="59" lengthAdjust="spacingAndGlyphs" font-size="13">01.04.2018</text>
    <text x="783.8" y="684" textLength="59" lengthAdjust="spacingAndGlyphs" font-size="13">01.07.2018</text>
</g>
</svg>
</body></html>
